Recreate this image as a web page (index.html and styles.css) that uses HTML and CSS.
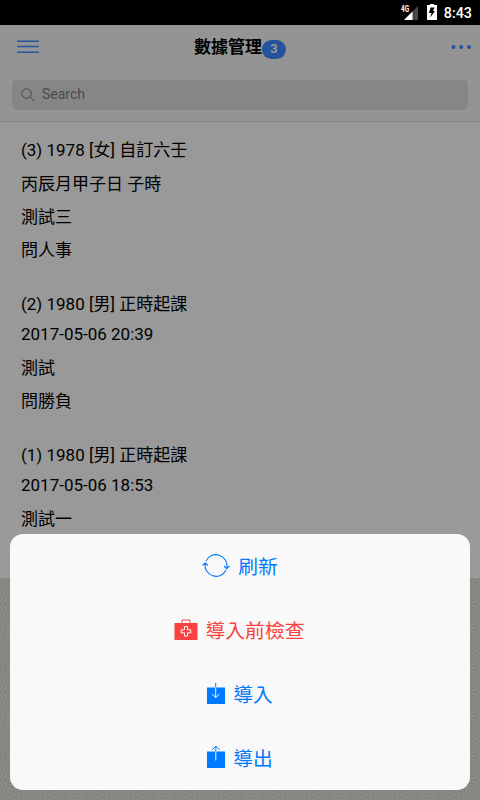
FILE: index.html
```html
<!DOCTYPE html>
<html lang="zh-Hant">
<head>
<meta charset="utf-8">
<title>數據管理</title>
<link rel="stylesheet" href="styles.css">
</head>
<body>
<svg class="pattern" width="480" height="222" aria-hidden="true">
  <defs>
    <pattern id="waves" x="-1" y="4" width="22" height="22" patternUnits="userSpaceOnUse">
      <rect width="22" height="22" fill="#84827d"/>
      <g fill="none" stroke="#8e8c87" stroke-width="1.6">
        <circle cx="11" cy="11" r="2.5"/><circle cx="11" cy="11" r="6"/><circle cx="11" cy="11" r="9.5"/>
        <circle cx="0" cy="0" r="3.5"/><circle cx="22" cy="0" r="3.5"/><circle cx="0" cy="22" r="3.5"/><circle cx="22" cy="22" r="3.5"/>
      </g>
    </pattern>
  </defs>
  <rect width="480" height="222" fill="url(#waves)"/>
</svg>
<div class="statusbar">
  <svg class="signal" width="19" height="17" viewBox="0 0 19 17"><path d="M18 2v14H4z" fill="#484848"/><path d="M12.5 7.5V16H4z" fill="#fff"/></svg>
  <span class="network">4G</span>
  <svg class="battery" width="10" height="16" viewBox="0 0 10 16"><path d="M3 0h4v1h3v15H0V1h3z" fill="#fff"/><path d="M3.5 3.5h4L6 7h2L3.2 13.5 4.5 9H2z" fill="#000"/></svg>
  <span class="clock">8:43</span>
</div>
<header class="header">
  <svg class="menu" width="22" height="14" viewBox="0 0 22 14"><path d="M.5 1.2h21M.5 6.5h21M.5 12.2h21" stroke="#24529b" stroke-width="1.5" stroke-linecap="round"/></svg>
  <h1 class="title"><span class="name">數據管理</span><span class="badge">3</span></h1>
  <svg class="more" width="20" height="4" viewBox="0 0 20 4" fill="#24529b"><circle cx="2.5" cy="2" r="2"/><circle cx="10.2" cy="2" r="2"/><circle cx="18" cy="2" r="2"/></svg>
</header>
<div class="searchwrap">
  <div class="search">
    <svg width="14" height="14" viewBox="0 0 14 14" fill="none" stroke="#444"><circle cx="5.5" cy="5.5" r="4.7"/><path d="M9 9l4.5 4.2"/></svg>
    <span>Search</span>
  </div>
</div>
<main class="list">
  <section class="item"><p class="head">(3) 1978 [女] 自訂六壬</p><p>丙辰月甲子日 子時</p><p>測試三</p><p>問人事</p></section>
  <section class="item"><p class="head">(2) 1980 [男] 正時起課</p><p class="date">2017-05-06 20:39</p><p>測試</p><p>問勝負</p></section>
  <section class="item"><p class="head">(1) 1980 [男] 正時起課</p><p class="date">2017-05-06 18:53</p><p>測試一</p></section>
</main>
<div class="sheet">
  <div class="action"><svg width="28" height="24" viewBox="0 0 28 24" fill="none" stroke="#007aff" stroke-width="1.1"><path d="M4 7A11 11 0 0 1 24.8 13.5M24 16A11 11 0 0 1 3.2 9.5M.6 11.5L3.2 9 6 11.5M22 12l2.7 2.7 2.8-2.7"/></svg><span>刷新</span></div>
  <div class="action danger"><svg width="24" height="22" viewBox="0 0 24 22"><path d="M.5 4h23v17H.5z" fill="#f94141"/><path d="M8 4V1h8v3" fill="none" stroke="#f94141"/><path d="M10.5 7.5h3v3.3h3.3v3h-3.3v3.3h-3v-3.3H7.2v-3h3.3z" fill="none" stroke="#fff"/></svg><span>導入前檢查</span></div>
  <div class="action"><svg width="18" height="22" viewBox="0 0 18 22"><path d="M0 4.5h18V21H0z" fill="#007aff"/><path d="M8.7 0v4.5" stroke="#007aff"/><path d="M8.7 4.5v10M5 11l3.7 3.6 3.8-3.6" fill="none" stroke="#f8f8f8"/></svg><span>導入</span></div>
  <div class="action"><svg width="18" height="24" viewBox="0 0 18 24"><path d="M0 5.5h18V22H0z" fill="#007aff"/><path d="M8.8 5.5V0M5 3.8L8.8.2 12.6 3.8" fill="none" stroke="#007aff"/><path d="M8.8 5.5v9" stroke="#f8f8f8"/></svg><span>導出</span></div>
</div>
</body>
</html>
```
FILE: styles.css
```css
* { box-sizing: border-box; }
body { margin: 0; width: 480px; height: 800px; position: relative; overflow: hidden; background: #84827d; font-family: Roboto, "Noto Sans CJK TC", sans-serif; font-size: 17px; color: #000; }
svg { display: block; flex: none; }
.pattern { position: absolute; left: 0; top: 578px; }
.statusbar { height: 25px; background: #000; color: #fff; display: flex; align-items: center; justify-content: flex-end; padding-right: 8px; position: relative; }
.signal { margin-right: 8px; }
.network { position: absolute; left: 401px; top: 5px; font-size: 8.5px; line-height: 8px; font-weight: 700; background: #000; transform: scaleX(.75); transform-origin: 0 0; }
.battery { margin-right: 7px; margin-top: -2px; }
.clock { font-size: 14.3px; font-weight: 500; line-height: 24px; margin-top: 1px; }
.header { height: 44px; background: #949494; display: flex; align-items: center; justify-content: space-between; padding: 0 9px 0 17px; }
.title { margin: 0 10px 0 0; font-size: 17px; line-height: 24px; font-weight: 700; display: flex; align-items: center; }
.badge { width: 24px; height: 19px; border-radius: 10px; background: #24529b; color: #999; font-size: 13px; line-height: 18px; text-align: center; margin-top: 4px; }
.searchwrap { height: 53px; padding: 11px 12px; background: #949494; border-bottom: 1px solid #858585; }
.search { height: 30px; border-radius: 5px; background: #868686; color: #4a4a4a; font-size: 14px; display: flex; align-items: center; gap: 7px; padding: 0 9px; }
.search span { line-height: 28px; margin-top: -2px; }
.list { height: 456px; background: #999; padding: 12px 21px 0; overflow: hidden; }
.item { margin-bottom: 22px; }
.item p { margin: 0; height: 33px; line-height: 35px; white-space: nowrap; }
.item .head { line-height: 33px; }
.item .date { height: 30px; line-height: 27px; }
.sheet { position: absolute; left: 10px; top: 534px; width: 460px; height: 256px; border-radius: 13px; background: #f9f9f9; color: #007aff; }
.action { height: 64px; display: flex; align-items: center; justify-content: center; gap: 8px; font-size: 19.8px; line-height: 64px; }
.action span { padding-top: 2px; line-height: 62px; margin-top: 2px; }
.danger { color: #f94141; padding-right: 2px; }
```
